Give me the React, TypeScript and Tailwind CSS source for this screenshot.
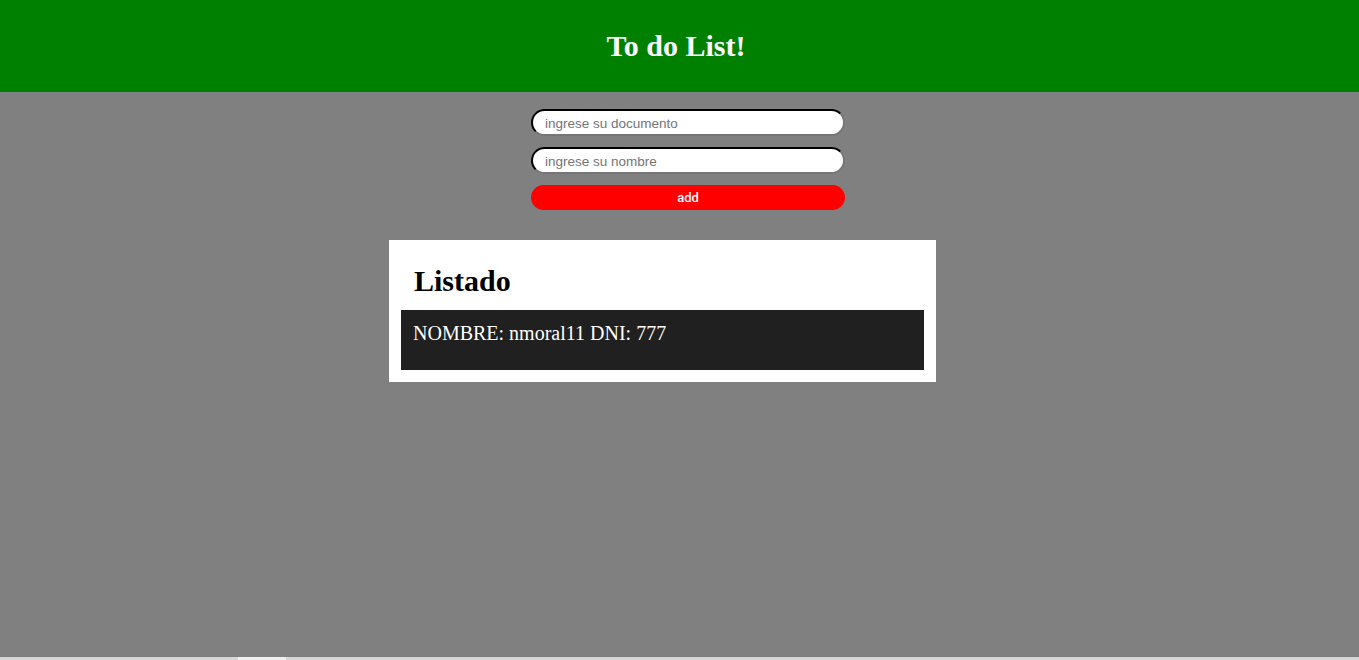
export default function App() {
  return (
    <div className="w-full h-[660px] flex flex-col bg-[#808080] overflow-hidden">
      <header className="h-[92px] bg-[#008000] flex items-center justify-center shrink-0 pr-[7px]">
        <h1 className="text-white font-bold text-[30px] leading-none" style={{ fontFamily: '"Liberation Serif", serif' }}>
          To do List!
        </h1>
      </header>
      <main className="flex-1 flex flex-col items-start">
        <form className="ml-[531px] w-[314px] mt-[17px] flex flex-col gap-[11px]" onSubmit={(e) => e.preventDefault()}>
          <input
            placeholder="ingrese su documento"
            className="h-[27px] w-full rounded-full bg-white border-2 border-[#222] [border-style:inset] px-3 pt-[1px] text-[13.5px] text-black placeholder:text-[#757575] outline-none"
            style={{ fontFamily: '"Liberation Sans", Arial, sans-serif' }}
          />
          <input
            placeholder="ingrese su nombre"
            className="h-[27px] w-full rounded-full bg-white border-2 border-[#222] [border-style:inset] px-3 pt-[1px] text-[13.5px] text-black placeholder:text-[#757575] outline-none"
            style={{ fontFamily: '"Liberation Sans", Arial, sans-serif' }}
          />
          <button
            type="submit"
            className="h-[25px] w-full rounded-full bg-[#ff0000] text-white text-[13px] font-medium"
            style={{ fontFamily: 'Roboto, "Liberation Sans", sans-serif' }}
          >
            add
          </button>
        </form>
        <section className="ml-[389px] mt-[30px] w-[547px] bg-white p-3" style={{ fontFamily: '"Liberation Serif", serif' }}>
          <h2 className="h-[58px] px-[13px] pt-[11px] text-[30px] font-bold text-black leading-[36px]">Listado</h2>
          <div className="h-[60px] bg-[#202020] px-3 pt-[10px] text-white text-[20px] leading-[26px]">
            NOMBRE: nmoral11 DNI: 777
          </div>
        </section>
      </main>
      <div className="h-[3px] bg-[#d8d8d8] shrink-0 flex">
        <div className="ml-[238px] w-[48px] bg-[#f0f0f0]" />
      </div>
    </div>
  );
}
